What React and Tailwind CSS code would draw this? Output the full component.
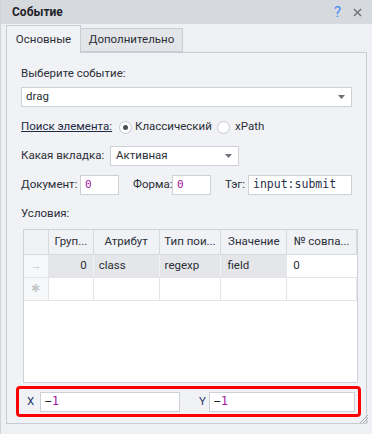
import React from 'react';

const font = { fontFamily: 'Roboto, "Noto Sans", sans-serif' };
const mono = { fontFamily: '"DejaVu Sans Mono", monospace' };

const Radio = ({ checked }) => (
  <span className="w-[13px] h-[13px] shrink-0 rounded-full border border-[#c4c8ce] bg-white flex items-center justify-center">
    {checked && <span className="w-[5px] h-[5px] rounded-full bg-[#4a4f57]" />}
  </span>
);

const Arrow = () => (
  <svg width="7" height="4" viewBox="0 0 7 4" className="shrink-0">
    <path d="M0 0h7L3.5 4z" fill="#6b7078" />
  </svg>
);

const App = () => {
  const cols = [
    { w: 'w-[45px]', label: 'Груп...' },
    { w: 'w-[66px]', label: 'Атрибут' },
    { w: 'w-[62px]', label: 'Тип пои...' },
    { w: 'w-[66px]', label: 'Значение' },
    { w: 'w-[70px]', label: '№ совпа...' },
  ];

  return (
    <div className="w-[372px] h-[434px] bg-[#eef0f4] text-[11.5px] text-[#2b2f36] overflow-hidden border-l border-[#d0d3d8] whitespace-nowrap" style={font}>
      {/* title */}
      <div className="h-[24px] bg-[#d6d9de] flex items-center pl-[11px] pr-[10px]">
        <span className="font-bold text-[12px] text-[#1f2329]">Событие</span>
        <span className="ml-auto text-[15px] text-[#3d8bf0] leading-none mr-[12px]">?</span>
        <svg width="9" height="9" viewBox="0 0 10 10">
          <path d="M1 1l8 8M9 1l-8 8" stroke="#6c7179" strokeWidth="1.5" />
        </svg>
      </div>

      {/* tabs */}
      <div className="flex items-end pl-[5px] h-[28px] pt-[1px]">
        <div className="relative top-[1px] z-10 h-[28px] w-[75px] border border-b-0 border-[#c9cdd3] bg-[#f1f2f6] flex items-center justify-center">
          Основные
        </div>
        <div className="h-[24px] w-[102px] border border-l-0 border-[#c9cdd3] bg-[#e3e5e9] flex items-center justify-center">
          Дополнительно
        </div>
      </div>

      {/* panel */}
      <div className="mx-[5px] h-[372px] border border-[#c9cdd3] bg-[#f1f2f6] px-[14px] relative">
        <div className="pt-[13px] h-[34px] leading-[14px]">Выберите событие:</div>
        <div className="h-[20px] bg-white border border-[#cdd1d6] flex items-center pl-[4px] pr-[6px]">
          <span>drag</span>
          <span className="ml-auto"><Arrow /></span>
        </div>

        <div className="h-[20px] mt-[10px] flex items-center">
          <span className="underline text-[#1f2a44] w-[98px]">Поиск элемента:</span>
          <Radio checked />
          <span className="ml-[3px] w-[82px]">Классический</span>
          <Radio />
          <span className="ml-[5px]">xPath</span>
        </div>

        <div className="h-[20px] mt-[9px] flex items-center">
          <span className="w-[89px]">Какая вкладка:</span>
          <div className="w-[129px] h-[20px] bg-white border border-[#cdd1d6] flex items-center pl-[5px] pr-[6px]">
            <span>Активная</span>
            <span className="ml-auto"><Arrow /></span>
          </div>
        </div>

        <div className="h-[20px] mt-[9px] flex items-center">
          <span className="w-[59px]">Документ:</span>
          <div className="w-[39px] h-[20px] bg-white border border-[#cdd1d6] flex items-center pl-[4px] text-[#a0159c] text-[11px]" style={mono}>0</div>
          <span className="ml-[14px] w-[39px]">Форма:</span>
          <div className="w-[39px] h-[20px] bg-white border border-[#cdd1d6] flex items-center pl-[4px] text-[#a0159c] text-[11px]" style={mono}>0</div>
          <span className="ml-[14px] w-[23px]">Тэг:</span>
          <div className="flex-1 h-[20px] bg-white border border-[#cdd1d6] flex items-center pl-[4px] text-[#2a2f48] text-[11.5px]" style={mono}>input:submit</div>
        </div>

        <div className="h-[18px] mt-[10px] flex items-center">Условия:</div>

        {/* grid */}
        <div className="mt-[6px] ml-[2px] w-[335px] h-[154px] border border-[#cfd3d9] bg-white overflow-hidden">
          <div className="flex h-[25px] bg-[#f0f2f6] border-b border-[#d6d9de]">
            <div className="w-[25px] border-r border-[#d6d9de]" />
            {cols.map((c) => (
              <div key={c.label} className={`${c.w} border-r border-[#d6d9de] flex items-center justify-center`}>{c.label}</div>
            ))}
          </div>
          <div className="flex h-[23px] border-b border-[#e3e5e9]">
            <div className="w-[25px] border-r border-[#e3e5e9] bg-[#f7f8fa] flex items-center justify-center text-[#c3c6cb]">→</div>
            <div className="w-[45px] bg-[#e4e6ea] border-r border-[#f2f3f5] flex items-center justify-end pr-[6px]">0</div>
            <div className="w-[66px] bg-[#e4e6ea] border-r border-[#f2f3f5] flex items-center pl-[5px]">class</div>
            <div className="w-[62px] bg-[#e4e6ea] border-r border-[#f2f3f5] flex items-center pl-[5px]">regexp</div>
            <div className="w-[66px] bg-[#e4e6ea] border-r border-[#e3e5e9] flex items-center pl-[6px]">field</div>
            <div className="w-[70px] flex items-center pl-[6px]">0</div>
          </div>
          <div className="flex h-[23px] border-b border-[#e3e5e9]">
            <div className="w-[25px] border-r border-[#e3e5e9] bg-[#f7f8fa] flex items-center justify-center text-[#c3c6cb] text-[11px]">✱</div>
            {cols.map((c) => (
              <div key={c.label} className={`${c.w} border-r border-[#e3e5e9]`} />
            ))}
          </div>
        </div>

        {/* X / Y */}
        <div className="mt-[3px] -ml-[5px] w-[345px] h-[31px] border-[3px] border-[#ff0000] rounded-[4px] flex items-center pl-[8px] pr-[3px]">
          <span className="w-[13px] text-[#2a3a6a]">X</span>
          <div className="w-[140px] h-[20px] bg-white border border-[#cdd1d6] flex items-center pl-[4px] text-[11.5px]" style={mono}>
            <span className="text-[#222]">−</span><span className="text-[#a0159c]">1</span>
          </div>
          <span className="ml-[19px] w-[10px] text-[#2a3a6a]">Y</span>
          <div className="flex-1 h-[20px] bg-white border border-[#cdd1d6] flex items-center pl-[4px] text-[11.5px]" style={mono}>
            <span className="text-[#222]">−</span><span className="text-[#a0159c]">1</span>
          </div>
        </div>

        <svg width="11" height="11" viewBox="0 0 11 11" className="absolute right-[-3px] bottom-[-1px]">
          <path d="M10 2L2 10M10 5L5 10M10 8L8 10" stroke="#a9adb3" strokeWidth="1" />
        </svg>
      </div>
    </div>
  );
};

export default App;
